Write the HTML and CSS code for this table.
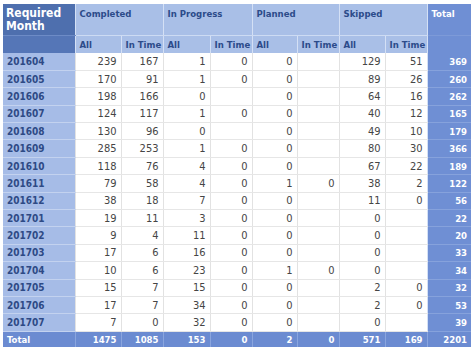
FILE: index.html
```html
<!DOCTYPE html>
<html>
<head>
<meta charset="utf-8">
<link rel="stylesheet" href="styles.css">
</head>
<body>
<table class="grid">
  <colgroup>
    <col class="c-label"><col class="c-all"><col class="c-time"><col class="c-all2"><col class="c-time"><col class="c-all3"><col class="c-time"><col class="c-all"><col class="c-time"><col class="c-total">
  </colgroup>
  <thead>
    <tr class="h1">
      <th class="corner">Required Month</th>
      <th colspan="2" class="grp">Completed</th>
      <th colspan="2" class="grp">In Progress</th>
      <th colspan="2" class="grp">Planned</th>
      <th colspan="2" class="grp">Skipped</th>
      <th class="tot-h">Total</th>
    </tr>
    <tr class="h2">
      <th class="corner2"></th>
      <th class="sub">All</th><th class="sub">In Time</th>
      <th class="sub">All</th><th class="sub">In Time</th>
      <th class="sub">All</th><th class="sub">In Time</th>
      <th class="sub">All</th><th class="sub">In Time</th>
      <th class="tot-h2"></th>
    </tr>
  </thead>
  <tbody>
    <tr><th>201604</th><td>239</td><td>167</td><td>1</td><td>0</td><td>0</td><td></td><td>129</td><td>51</td><td class="tot">369</td></tr>
    <tr><th>201605</th><td>170</td><td>91</td><td>1</td><td>0</td><td>0</td><td></td><td>89</td><td>26</td><td class="tot">260</td></tr>
    <tr><th>201606</th><td>198</td><td>166</td><td>0</td><td></td><td>0</td><td></td><td>64</td><td>16</td><td class="tot">262</td></tr>
    <tr><th>201607</th><td>124</td><td>117</td><td>1</td><td>0</td><td>0</td><td></td><td>40</td><td>12</td><td class="tot">165</td></tr>
    <tr><th>201608</th><td>130</td><td>96</td><td>0</td><td></td><td>0</td><td></td><td>49</td><td>10</td><td class="tot">179</td></tr>
    <tr><th>201609</th><td>285</td><td>253</td><td>1</td><td>0</td><td>0</td><td></td><td>80</td><td>30</td><td class="tot">366</td></tr>
    <tr><th>201610</th><td>118</td><td>76</td><td>4</td><td>0</td><td>0</td><td></td><td>67</td><td>22</td><td class="tot">189</td></tr>
    <tr><th>201611</th><td>79</td><td>58</td><td>4</td><td>0</td><td>1</td><td>0</td><td>38</td><td>2</td><td class="tot">122</td></tr>
    <tr><th>201612</th><td>38</td><td>18</td><td>7</td><td>0</td><td>0</td><td></td><td>11</td><td>0</td><td class="tot">56</td></tr>
    <tr><th>201701</th><td>19</td><td>11</td><td>3</td><td>0</td><td>0</td><td></td><td>0</td><td></td><td class="tot">22</td></tr>
    <tr><th>201702</th><td>9</td><td>4</td><td>11</td><td>0</td><td>0</td><td></td><td>0</td><td></td><td class="tot">20</td></tr>
    <tr><th>201703</th><td>17</td><td>6</td><td>16</td><td>0</td><td>0</td><td></td><td>0</td><td></td><td class="tot">33</td></tr>
    <tr><th>201704</th><td>10</td><td>6</td><td>23</td><td>0</td><td>1</td><td>0</td><td>0</td><td></td><td class="tot">34</td></tr>
    <tr><th>201705</th><td>15</td><td>7</td><td>15</td><td>0</td><td>0</td><td></td><td>2</td><td>0</td><td class="tot">32</td></tr>
    <tr><th>201706</th><td>17</td><td>7</td><td>34</td><td>0</td><td>0</td><td></td><td>2</td><td>0</td><td class="tot">53</td></tr>
    <tr><th>201707</th><td>7</td><td>0</td><td>32</td><td>0</td><td>0</td><td></td><td>0</td><td></td><td class="tot">39</td></tr>
  </tbody>
  <tfoot>
    <tr><th>Total</th><td>1475</td><td>1085</td><td>153</td><td>0</td><td>2</td><td>0</td><td>571</td><td>169</td><td>2201</td></tr>
  </tfoot>
</table>
</body>
</html>
```

FILE: styles.css
```css
html, body {
  margin: 0;
  background: #ffffff;
}
body {
  padding: 4px 3px 0 3px;
}
.grid {
  border-collapse: collapse;
  table-layout: fixed;
  width: 468px;
  font-family: "Liberation Sans Narrow", "DejaVu Sans Condensed", "Liberation Sans", sans-serif;
  font-size: 11px;
}
.c-label { width: 72px; }
.c-all { width: 46px; }
.c-all2 { width: 47px; }
.c-all3 { width: 45px; }
.c-time { width: 42px; }
.c-total { width: 44px; }

.grid th, .grid td {
  padding: 0 4px;
  overflow: hidden;
  white-space: nowrap;
}
tr.h1 {
  height: 31px;
}
.h1 th {
  vertical-align: top;
  text-align: left;
  padding-top: 3px;
  font-family: "DejaVu Sans Condensed", "DejaVu Sans", sans-serif;
  font-weight: bold;
}
.h1 .corner {
  background: #4e6fae;
  color: #ffffff;
  font-size: 12px;
  line-height: 13px;
  white-space: normal;
  padding: 3px 3px 0 3px;
  border-bottom: 1px solid #6d8bc6;
}
.h1 .grp {
  background: #a9bfe7;
  color: #2c4b8a;
  font-size: 9.5px;
  padding-top: 4px;
  border-left: 1px solid #d4e0f5;
  border-bottom: 1px solid #cddbf3;
}
.h1 .tot-h {
  background: #6f8fd4;
  color: #ffffff;
  font-size: 9.5px;
  padding-top: 4px;
  border-left: 1px solid #d4e0f5;
  border-bottom: 1px solid #7d9ad8;
}
tr.h2 {
  height: 18px;
}
.h2 th {
  vertical-align: middle;
  text-align: left;
  font-family: "DejaVu Sans Condensed", "DejaVu Sans", sans-serif;
  font-weight: bold;
  font-size: 9.5px;
}
.h2 .corner2 {
  background: #5576b7;
}
.h2 .sub {
  background: #a9bfe7;
  color: #2c4b8a;
  border-left: 1px solid #d4e0f5;
}
.h2 .tot-h2 {
  background: #6f8fd4;
  border-left: 1px solid #d4e0f5;
}

tbody tr {
  height: 17.4px;
}
tbody th {
  background: #a6bce7;
  color: #2e4a85;
  text-align: left;
  font-family: "DejaVu Sans Condensed", "DejaVu Sans", sans-serif;
  font-weight: bold;
  font-size: 10px;
  padding-left: 4px;
  border-bottom: 1px solid #c3d2ef;
}
tbody td {
  background: #ffffff;
  color: #454545;
  text-align: right;
  border-left: 1px solid #e2e2e2;
  border-bottom: 1px solid #e6e6e6;
}
tbody td.tot {
  background: #6f8fd4;
  color: #ffffff;
  font-family: "DejaVu Sans Condensed", "DejaVu Sans", sans-serif;
  font-weight: bold;
  font-size: 9.5px;
  border-left: 1px solid #d4e0f5;
  border-bottom: 1px solid #86a2dc;
}
tfoot tr {
  height: 16px;
}
tfoot th, tfoot td {
  background: #6b8bd1;
  color: #ffffff;
  font-family: "DejaVu Sans Condensed", "DejaVu Sans", sans-serif;
  font-weight: bold;
  font-size: 9.5px;
}
tfoot th {
  text-align: left;
}
tfoot td {
  text-align: right;
  border-left: 1px solid #8aa5de;
}
```
